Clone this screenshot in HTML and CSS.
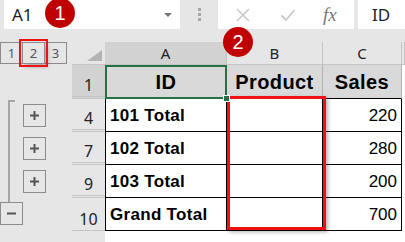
FILE: index.html
```html
<!DOCTYPE html>
<html lang="en">
<head>
  <meta charset="UTF-8">
  <title>Outline levels</title>
  <link rel="stylesheet" href="styles.css">
</head>
<body>
  <div class="app">
    <div class="topbar">
      <div class="namebox"><span>A1</span><span class="caret"></span></div>
      <div class="grip"><i></i><i></i><i></i></div>
      <div class="fxbar">
        <svg class="fx-cancel" width="16" height="16" viewBox="0 0 16 16"><path d="M2 2L14 14M14 2L2 14" stroke="#c8c8c8" stroke-width="1.6" fill="none"/></svg>
        <svg class="fx-enter" width="16" height="16" viewBox="0 0 16 16"><path d="M1.5 8.5L6 13L14.5 3" stroke="#c8c8c8" stroke-width="1.8" fill="none"/></svg>
        <span class="fx-label">fx</span>
      </div>
      <div class="formula">ID</div>
    </div>

    <div class="sheet">
      <div class="levels">
        <button class="lvl">1</button>
        <button class="lvl lvl-mark">2</button>
        <button class="lvl">3</button>
      </div>
      <div class="corner"><span class="corner-tri"></span></div>
      <div class="colhead sel">A</div>
      <div class="colhead">B</div>
      <div class="colhead">C</div>
      <div class="colhead"></div>

      <div class="gutter">
        <div class="bracket"></div>
        <div class="g-row r4"><span class="ob"><svg width="21" height="21" viewBox="0 0 21 21"><path d="M6 10.5h9M10.5 6v9" stroke="#555" stroke-width="2"/></svg></span></div>
        <div class="g-row r7"><span class="ob"><svg width="21" height="21" viewBox="0 0 21 21"><path d="M6 10.5h9M10.5 6v9" stroke="#555" stroke-width="2"/></svg></span></div>
        <div class="g-row r9"><span class="ob"><svg width="21" height="21" viewBox="0 0 21 21"><path d="M6 10.5h9M10.5 6v9" stroke="#555" stroke-width="2"/></svg></span></div>
        <div class="g-row r10"><span class="ob minus"><svg width="21" height="21" viewBox="0 0 21 21"><path d="M6 10.5h9" stroke="#555" stroke-width="2"/></svg></span></div>
      </div>

      <div class="rowhead sel">1</div>
      <div class="cell head a1">ID</div>
      <div class="cell head">Product</div>
      <div class="cell head">Sales</div>
      <div class="filler"></div>

      <div class="rowhead">4</div>
      <div class="cell first">101 Total</div>
      <div class="cell b row4"></div>
      <div class="cell num">220</div>
      <div class="filler"></div>

      <div class="rowhead">7</div>
      <div class="cell first">102 Total</div>
      <div class="cell b row7"></div>
      <div class="cell num">280</div>
      <div class="filler"></div>

      <div class="rowhead">9</div>
      <div class="cell first">103 Total</div>
      <div class="cell b row9"></div>
      <div class="cell num">200</div>
      <div class="filler"></div>

      <div class="rowhead last">10</div>
      <div class="cell first">Grand Total</div>
      <div class="cell b row10"></div>
      <div class="cell num">700</div>
      <div class="filler"></div>

      <div class="rowhead empty"></div>
      <div class="mark-col"></div>
    </div>

    <span class="badge badge-1">1</span>
    <span class="badge badge-2">2</span>
  </div>
</body>
</html>
```

FILE: styles.css
```css
html, body {
  margin: 0; padding: 0;
  background: #e6e6e6;
  font-family: 'Liberation Sans', Arial, sans-serif;
  overflow: hidden;
}
.app {
  position: relative;
  width: 405px; height: 242px;
}

/* formula bar */
.topbar {
  display: flex;
  height: 29px;
  padding-left: 4px;
}
.namebox {
  width: 176px;
  box-sizing: border-box;
  background: #fff;
  display: flex;
  align-items: center;
  justify-content: space-between;
  padding: 0 8px 0 8px;
  font-family: 'Noto Sans', sans-serif;
  font-size: 17px;
  color: #222;
}
.caret {
  width: 0; height: 0;
  border-left: 4px solid transparent;
  border-right: 4px solid transparent;
  border-top: 4px solid #777;
}
.grip {
  width: 38px;
  display: flex;
  flex-direction: column;
  align-items: center;
  justify-content: center;
  gap: 2px;
}
.grip i {
  width: 3px; height: 3px;
  background: #a6a6a6;
}
.fxbar {
  width: 136px;
  background: #fff;
  display: flex;
  align-items: center;
}
.fx-cancel { margin-left: 17px; }
.fx-enter { margin-left: 29px; }
.fx-label {
  margin-left: 27px;
  font-family: 'Liberation Serif', serif;
  font-style: italic;
  font-size: 19px;
  color: #777;
  line-height: 1;
}
.formula {
  flex: 1;
  margin-left: 4px;
  background: #fff;
  display: flex;
  align-items: center;
  padding-left: 14px;
  font-family: 'Noto Sans', sans-serif;
  font-size: 17px;
  color: #222;
}

/* sheet grid */
.sheet {
  display: grid;
  width: 405px;
  margin-top: 13px;
  grid-template-columns: 72px 33px 122px 96px 79px 3px;
  grid-template-rows: 23px 34px 33px 33px 33px 33px 11px;
  background: #fff;
}
.sheet > * { min-width: 0; }
.levels {
  display: flex;
  align-items: flex-start;
  background: #e6e6e6;
}
.lvl {
  width: 23px; height: 22px;
  margin: 0 -1px 0 0;
  padding: 0;
  border: 1px solid #8c8c8c;
  background: #e6e6e6;
  font-family: 'Noto Sans', sans-serif;
  font-size: 13px;
  color: #555;
}
.lvl-mark {
  position: relative;
  outline: 2px solid #ee1111;
  outline-offset: 1px;
  box-shadow: 3px 3px 4px rgba(0,0,0,0.25);
  z-index: 1;
}
.corner {
  background: #e6e6e6;
  display: flex;
  justify-content: flex-end;
  align-items: flex-end;
  padding: 0 3px 3px 0;
  border-bottom: 1px solid #c4c4c4;
}
.corner-tri {
  width: 0; height: 0;
  border-left: 15px solid transparent;
  border-bottom: 11px solid #b4b4b4;
}
.colhead {
  box-sizing: border-box;
  background: #e6e6e6;
  border-right: 1px solid #c4c4c4;
  border-bottom: 1px solid #c4c4c4;
  display: flex;
  align-items: center;
  justify-content: center;
  font-family: 'Noto Sans', sans-serif;
  font-size: 15px;
  color: #222;
}
.colhead.sel { background: #d2d2d2; }

/* outline gutter */
.gutter {
  grid-column: 1;
  grid-row: 2 / 8;
  display: grid;
  grid-template-rows: 34px 33px 33px 33px 33px 11px;
  background: #e6e6e6;
}
.bracket {
  grid-column: 1;
  grid-row: 2 / 5;
  width: 5px;
  margin: 1px 0 -4px 8px;
  border-left: 2px solid #a6a6a6;
  border-top: 2px solid #a6a6a6;
}
.g-row {
  grid-column: 1;
  display: flex;
  align-items: center;
  padding-left: 23px;
}
.r4 { grid-row: 2; }
.r7 { grid-row: 3; }
.r9 { grid-row: 4; }
.r10 { grid-row: 5; align-items: flex-start; padding: 4px 0 0 0; }
.ob {
  display: block;
  width: 21px; height: 21px;
  border: 1px solid #8c8c8c;
  background: #e6e6e6;
}
.ob svg { display: block; }

/* row headers */
.rowhead {
  grid-column: 2;
  background: #e6e6e6;
  border-bottom: 3px double #c4c4c4;
  display: flex;
  align-items: flex-end;
  justify-content: center;
  padding-bottom: 3px;
  box-sizing: border-box;
  font-family: 'Noto Sans', sans-serif;
  font-size: 16px;
  line-height: 1;
  color: #222;
}
.rowhead.sel { background: #d2d2d2; }
.rowhead.last { border-bottom: 1px solid #c4c4c4; }
.rowhead.empty { border: none; }

/* cells */
.cell {
  box-sizing: border-box;
  overflow: hidden;
  border-right: 1px solid #000;
  border-bottom: 1px solid #000;
  display: flex;
  align-items: center;
  padding: 1px 4px 0 4px;
  font-size: 17px;
  font-weight: 700;
  letter-spacing: 0.3px;
  color: #000;
  white-space: nowrap;
}
.cell.first { border-left: 1px solid #000; }
.cell.b { grid-column: 4; }
.cell.row4 { grid-row: 3; }
.cell.row7 { grid-row: 4; }
.cell.row9 { grid-row: 5; }
.cell.row10 { grid-row: 6; }
.cell.head {
  background: #d9d9d9;
  border-right-color: #b4b4b4;
  justify-content: center;
  font-size: 20px;
  letter-spacing: 0.4px;
}
.cell.a1 {
  position: relative;
  overflow: visible;
  border: 2px solid #217346;
}
.cell.a1::after {
  content: "";
  position: absolute;
  right: -5px; bottom: -5px;
  width: 5px; height: 5px;
  background: #217346;
  border: 1px solid #fff;
  z-index: 2;
}
.cell.num {
  justify-content: flex-end;
  font-weight: 400;
  letter-spacing: 0;
  padding-right: 4px;
}
.filler { background: #fff; }

/* annotations */
.mark-col {
  grid-column: 4;
  grid-row: 3 / 7;
  margin: -3px -3px 1px 0;
  border: 3px solid #ee1111;
  box-shadow: 2px 2px 4px rgba(0,0,0,0.3);
  z-index: 1;
}
.badge {
  position: absolute;
  width: 30px; height: 30px;
  border-radius: 50%;
  background: #c00000;
  color: #fff;
  font-size: 20px;
  display: flex;
  align-items: center;
  justify-content: center;
}
.badge-1 { left: 45px; top: -2px; }
.badge-2 { left: 223px; top: 27px; }
```
